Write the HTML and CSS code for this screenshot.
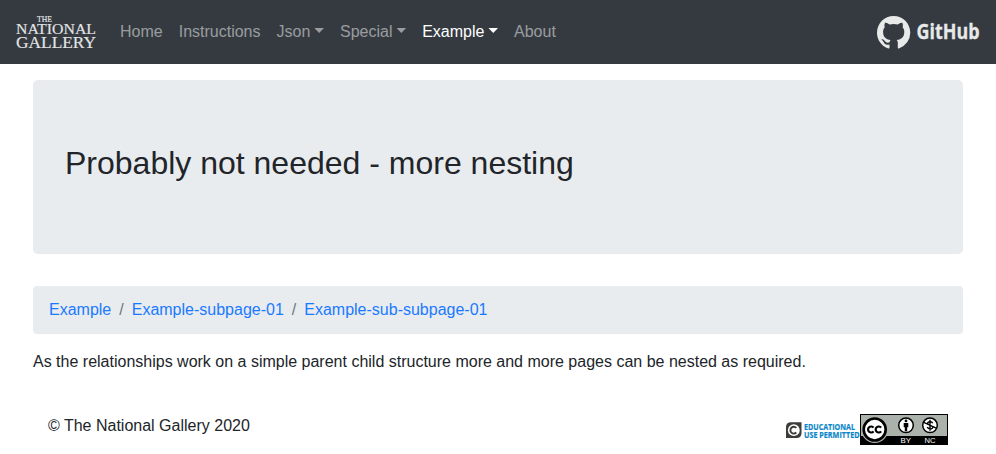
FILE: index.html
```html
<!DOCTYPE html>
<html lang="en">
<head>
<meta charset="utf-8">
<title>The National Gallery</title>
<link rel="stylesheet" href="styles.css">
</head>
<body>
<nav class="navbar">
  <a class="brand" href="#">
    <svg width="82" height="33" viewBox="0 0 82 33">
      <g class="brand-text">
        <text x="21" y="5.800" font-size="7.600" textLength="15" lengthAdjust="spacingAndGlyphs">THE</text>
        <text x="0" y="17.600" font-size="15" textLength="80" lengthAdjust="spacingAndGlyphs">NATIONAL</text>
        <text x="0" y="31.800" font-size="16.500" textLength="80" lengthAdjust="spacingAndGlyphs">GALLERY</text>
      </g>
    </svg>
  </a>
  <ul class="nav">
    <li><a href="#">Home</a></li>
    <li><a href="#">Instructions</a></li>
    <li><a class="dropdown" href="#">Json</a></li>
    <li><a class="dropdown" href="#">Special</a></li>
    <li><a class="dropdown active" href="#">Example</a></li>
    <li><a href="#">About</a></li>
  </ul>
  <a class="github" href="#">
    <svg width="104" height="34" viewBox="0 0 104 34">
      <path transform="translate(1 1) scale(2.080)" d="M8 0C3.58 0 0 3.58 0 8c0 3.54 2.29 6.53 5.47 7.59.4.07.55-.17.55-.38 0-.19-.01-.82-.01-1.49-2.01.37-2.53-.49-2.69-.94-.09-.23-.48-.94-.82-1.13-.28-.15-.68-.52-.01-.53.63-.01 1.08.58 1.23.82.72 1.21 1.87.87 2.33.66.07-.52.28-.87.51-1.07-1.78-.2-3.64-.89-3.64-3.95 0-.87.31-1.59.82-2.15-.08-.2-.36-1.02.08-2.12 0 0 .67-.21 2.2.82.64-.18 1.32-.27 2-.27.68 0 1.36.09 2 .27 1.53-1.04 2.2-.82 2.2-.82.44 1.1.16 1.92.08 2.12.51.56.82 1.27.82 2.15 0 3.07-1.87 3.75-3.65 3.95.29.25.54.73.54 1.48 0 1.07-.01 1.93-.01 2.2 0 .21.15.46.55.38A8.013 8.013 0 0016 8c0-4.42-3.58-8-8-8z"/>
      <text class="github-text" x="40.500" y="24" font-size="21" textLength="63" lengthAdjust="spacingAndGlyphs">GitHub</text>
    </svg>
  </a>
</nav>
<main class="container">
  <header class="jumbotron"><h1>Probably not needed - more nesting</h1></header>
  <ol class="breadcrumb">
    <li><a href="#">Example</a></li>
    <li><a href="#">Example-subpage-01</a></li>
    <li><a href="#">Example-sub-subpage-01</a></li>
  </ol>
  <p class="text">As the relationships work on a simple parent child structure more and more pages can be nested as required.</p>
  <footer class="footer">
    <span>© The National Gallery 2020</span>
    <div class="licences">
      <svg width="74" height="31" viewBox="0 0 74 31">
        <path fill="#3c3c3b" d="M5 8.300h10.500v10.700q0 5-5 5H0V13.300q0-5 5-5z"/>
        <circle cx="7.800" cy="16.200" r="5.900" fill="#fff"/>
        <path d="M10.300 13.900a3.400 3.400 0 1 0 0 4.600" fill="none" stroke="#3c3c3b" stroke-width="1.900"/>
        <g class="edu-text">
          <text x="18" y="15.500" font-size="9" textLength="51" lengthAdjust="spacingAndGlyphs">EDUCATIONAL</text>
          <text x="18" y="23.800" font-size="9" textLength="55.500" lengthAdjust="spacingAndGlyphs">USE PERMITTED</text>
        </g>
      </svg>
      <svg width="88" height="31" viewBox="0 0 88 31">
        <rect width="88" height="31" fill="#000"/>
        <rect x="1" y="1" width="86" height="21" fill="#aab2ab"/>
        <circle cx="14.700" cy="15.500" r="13.500" fill="#aab2ab"/>
        <circle cx="14.700" cy="15.500" r="11" fill="#fff" stroke="#000" stroke-width="2.600"/>
        <path d="M13.500 13.700a3 3 0 1 0 0 3.600M21.100 13.700a3 3 0 1 0 0 3.600" fill="none" stroke="#000" stroke-width="2.200"/>
        <circle cx="46" cy="11.300" r="7.300" fill="#fff" stroke="#000" stroke-width="1.500"/>
        <circle cx="46" cy="6.900" r="1.400"/>
        <path d="M43.700 8.900h4.600v4.300h-1.100v4h-2.400v-4h-1.100z"/>
        <circle cx="70" cy="11.300" r="7.300" fill="#fff" stroke="#000" stroke-width="1.500"/>
        <path d="M72.700 9.200c-.7-2-5-2-5 .2 0 2.300 5 1.600 5 3.800 0 2.300-4.600 2.300-5.400-.2M70 5.800v11M63.800 8.300l12.400 5.800" fill="none" stroke="#000" stroke-width="1.400"/>
        <g class="cc-text">
          <text x="40.500" y="29" font-size="7.500" textLength="10.500" lengthAdjust="spacingAndGlyphs">BY</text>
          <text x="64.500" y="29" font-size="7.500" textLength="11" lengthAdjust="spacingAndGlyphs">NC</text>
        </g>
      </svg>
    </div>
  </footer>
</main>
</body>
</html>
```
FILE: styles.css
```css
* { box-sizing: border-box; }
body { margin: 0; background: #fff; color: #212529; font: 16px/24px "Liberation Sans", Arial, sans-serif; }
a { color: #1a7aff; text-decoration: none; }
svg { display: block; overflow: visible; }
.navbar { display: flex; align-items: center; height: 64px; padding: 0 16px; background: #343a40; }
.brand { margin-right: 14px; }
.brand-text { fill: #e4e5e6; stroke: #e4e5e6; stroke-width: .15px; font-family: "Liberation Serif", serif; }
.nav { display: flex; margin: 0; padding: 0; list-style: none; }
.nav a { display: block; padding: 8px; color: rgba(255, 255, 255, .5); }
.nav a.active { color: #fff; }
.dropdown::after { content: ""; display: inline-block; width: 9.6px; height: 5px; margin-left: 4.08px; vertical-align: 4px; background: currentColor; clip-path: polygon(0 0, 100% 0, 50% 100%); }
.github { margin-left: auto; }
.github svg { fill: #e8e9e9; }
.github-text { font-family: "Open Sans", sans-serif; font-weight: 700; stroke: #e8e9e9; stroke-width: .3px; }
.container { width: 930px; margin: 16px auto 0; }
.jumbotron { height: 174px; padding: 64px 32px; border-radius: 5px; background: #e9ecef; }
h1 { margin: 0; font-size: 32px; line-height: 38px; font-weight: 400; }
.breadcrumb { display: flex; height: 48px; margin: 32px 0 16px; padding: 12px 16px; border-radius: 4px; background: #e9ecef; list-style: none; }
.breadcrumb li + li::before { content: "/"; padding: 0 8px; color: #6c757d; }
.text { margin: 0; }
.footer { display: flex; justify-content: space-between; margin-top: 40px; padding: 0 15px; }
.licences { display: flex; }
.edu-text { fill: #0a86c8; stroke: #0a86c8; stroke-width: .2px; font-family: "Open Sans", sans-serif; font-weight: 700; }
.cc-text { fill: #fff; font-family: "Liberation Sans", sans-serif; }
```
